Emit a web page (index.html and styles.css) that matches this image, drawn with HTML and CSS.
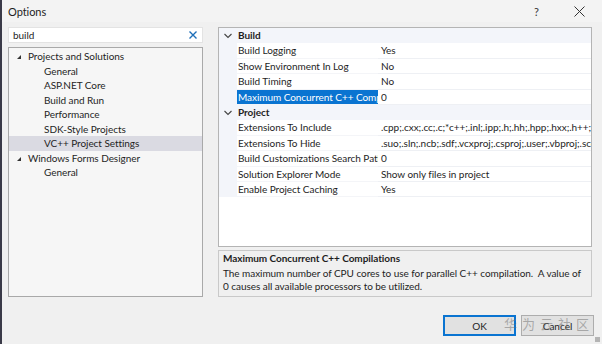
FILE: index.html
```html
<!DOCTYPE html>
<html lang="en">
<head>
    <meta charset="UTF-8">
    <title>Options</title>
    <link rel="stylesheet" href="styles.css">
</head>
<body>
<div class="dialog">
    <div class="titlebar">
        <span class="title">Options</span>
        <span class="help">?</span>
        <span class="close">
            <svg width="11" height="11" viewBox="0 0 11 11"><path d="M0.5 0.5L10.5 10.5M10.5 0.5L0.5 10.5" stroke="#333" stroke-width="1"/></svg>
        </span>
    </div>

    <div class="main">
        <div class="left">
            <div class="search">
                <span>build</span>
                <svg width="8" height="8" viewBox="0 0 8 8"><path d="M0.5 0.5L7.5 7.5M7.5 0.5L0.5 7.5" stroke="#1e6fb8" stroke-width="1.4"/></svg>
            </div>
            <div class="tree">
                <div class="node parent"><span class="tri"></span>Projects and Solutions</div>
                <div class="node child">General</div>
                <div class="node child">ASP.NET Core</div>
                <div class="node child">Build and Run</div>
                <div class="node child">Performance</div>
                <div class="node child">SDK-Style Projects</div>
                <div class="node child selected">VC++ Project Settings</div>
                <div class="node parent"><span class="tri"></span>Windows Forms Designer</div>
                <div class="node child">General</div>
            </div>
        </div>

        <div class="right">
            <div class="grid">
                <div class="row category">
                    <span class="chev"><svg width="8" height="6" viewBox="0 0 8 6"><path d="M0.5 1L4 4.5L7.5 1" stroke="#444" stroke-width="1.1" fill="none"/></svg></span>
                    <span class="cat-name">Build</span>
                </div>
                <div class="row"><span class="strip"></span><span class="name">Build Logging</span><span class="value">Yes</span></div>
                <div class="row"><span class="strip"></span><span class="name">Show Environment In Log</span><span class="value">No</span></div>
                <div class="row"><span class="strip"></span><span class="name">Build Timing</span><span class="value">No</span></div>
                <div class="row"><span class="strip"></span><span class="name active">Maximum Concurrent C++ Compilations</span><span class="value">0</span></div>
                <div class="row category">
                    <span class="chev"><svg width="8" height="6" viewBox="0 0 8 6"><path d="M0.5 1L4 4.5L7.5 1" stroke="#444" stroke-width="1.1" fill="none"/></svg></span>
                    <span class="cat-name">Project</span>
                </div>
                <div class="row"><span class="strip"></span><span class="name">Extensions To Include</span><span class="value">.cpp;.cxx;.cc;.c;*c++;.inl;.ipp;.h;.hh;.hpp;.hxx;.h++;.hm;.rc;.resx</span></div>
                <div class="row"><span class="strip"></span><span class="name">Extensions To Hide</span><span class="value">.suo;.sln;.ncb;.sdf;.vcxproj;.csproj;.user;.vbproj;.scc;.vssscc</span></div>
                <div class="row"><span class="strip"></span><span class="name">Build Customizations Search Path</span><span class="value">0</span></div>
                <div class="row"><span class="strip"></span><span class="name">Solution Explorer Mode</span><span class="value">Show only files in project</span></div>
                <div class="row"><span class="strip"></span><span class="name">Enable Project Caching</span><span class="value">Yes</span></div>
            </div>
            <div class="desc">
                <div class="desc-title">Maximum Concurrent C++ Compilations</div>
                <div class="desc-text">The maximum number of CPU cores to use for parallel C++ compilation.&nbsp; A value of 0 causes all available processors to be utilized.</div>
            </div>
        </div>
    </div>

    <div class="buttons">
        <button class="btn default">OK</button>
        <button class="btn">Cancel</button>
    </div>
    <div class="watermark">华为云社区</div>
    <div class="grip"></div>
</div>
</body>
</html>
```

FILE: styles.css
```css
body {
    margin: 0;
    width: 602px;
    height: 344px;
    overflow: hidden;
    background-color: #f0f0f0;
    font-family: Lato, "Open Sans", sans-serif;
    font-size: 10px;
    letter-spacing: -0.05px;
    color: #1e1e1e;
}
.dialog {
    position: relative;
    height: 344px;
    border-left: 2px solid #3a3a48;
    box-sizing: border-box;
    display: flex;
    flex-direction: column;
}
.titlebar {
    height: 22px;
    display: flex;
    align-items: center;
    padding-left: 6px;
    background-color: #f3f3f3;
}
.title {
    font-size: 11px;
    flex: 1;
}
.help {
    font-size: 11px;
    width: 40px;
    color: #333;
}
.close {
    width: 28px;
    display: flex;
}
.main {
    display: flex;
    gap: 15px;
    padding: 5px 0 0 6px;
}
.left {
    width: 195px;
    display: flex;
    flex-direction: column;
    gap: 4px;
}
.search {
    height: 16px;
    background: white;
    border: 1px solid #e3e3e3;
    box-sizing: border-box;
    display: flex;
    align-items: center;
    justify-content: space-between;
    padding: 0 5px 0 4px;
}
.tree {
    height: 250px;
    box-sizing: border-box;
    background-color: #f6f6f6;
    border: 1px solid #a9a9a9;
    padding-top: 1px;
}
.node {
    height: 14.5px;
    line-height: 14.5px;
    white-space: nowrap;
}
.parent {
    padding-left: 8px;
}
.child {
    padding-left: 35px;
}
.selected {
    background-color: #dadae2;
}
.tri {
    display: inline-block;
    width: 0;
    height: 0;
    border-left: 4px solid transparent;
    border-bottom: 4px solid #333;
    margin-right: 7px;
    vertical-align: 1px;
}
.right {
    width: 374px;
    display: flex;
    flex-direction: column;
    gap: 3px;
}
.grid {
    height: 220px;
    box-sizing: border-box;
    background: white;
    border: 1px solid #b4b4b4;
    overflow: hidden;
}
.row {
    display: flex;
    height: 15.4px;
    line-height: 15.4px;
    white-space: nowrap;
}
.row.category {
    background-color: #f3f5fa;
}
.chev {
    width: 18px;
    display: flex;
    align-items: center;
    justify-content: center;
}
.cat-name {
    font-weight: bold;
    padding-left: 1px;
}
.strip {
    width: 18px;
    flex-shrink: 0;
    background-color: #f3f5fa;
}
.name {
    width: 141px;
    flex-shrink: 0;
    overflow: hidden;
    padding-left: 1px;
    box-sizing: border-box;
    border-bottom: 1px solid #f4f5f8;
}
.name.active {
    background-color: #0a74d1;
    color: white;
}
.value {
    flex: 1;
    overflow: hidden;
    padding-left: 3px;
    border-bottom: 1px solid #eef0f4;
}
.desc {
    height: 47px;
    box-sizing: border-box;
    border: 1px solid #c9c9c9;
    padding: 1px 10px 1px 4px;
    line-height: 13px;
}
.desc-title {
    font-weight: bold;
    margin-bottom: 2px;
}
.buttons {
    display: flex;
    justify-content: flex-end;
    gap: 5px;
    padding: 18px 8px 0 0;
}
.btn {
    width: 73px;
    height: 21px;
    font-family: inherit;
    font-size: 10px;
    color: #1e1e1e;
    background-color: #e1e1e1;
    border: 1px solid #adadad;
    padding: 0;
}
.btn.default {
    border: 2px solid #0a74d1;
}
.watermark {
    position: absolute;
    left: 502px;
    top: 314px;
    white-space: nowrap;
    font-family: "Noto Sans CJK SC", sans-serif;
    font-size: 13px;
    letter-spacing: 5px;
    color: rgba(110, 110, 110, 0.5);
}
.grip {
    position: absolute;
    right: 2px;
    bottom: 2px;
    width: 5px;
    height: 5px;
    background: radial-gradient(#b0b0b0 0.7px, transparent 0.8px) 0 0 / 2px 2px;
}
```
